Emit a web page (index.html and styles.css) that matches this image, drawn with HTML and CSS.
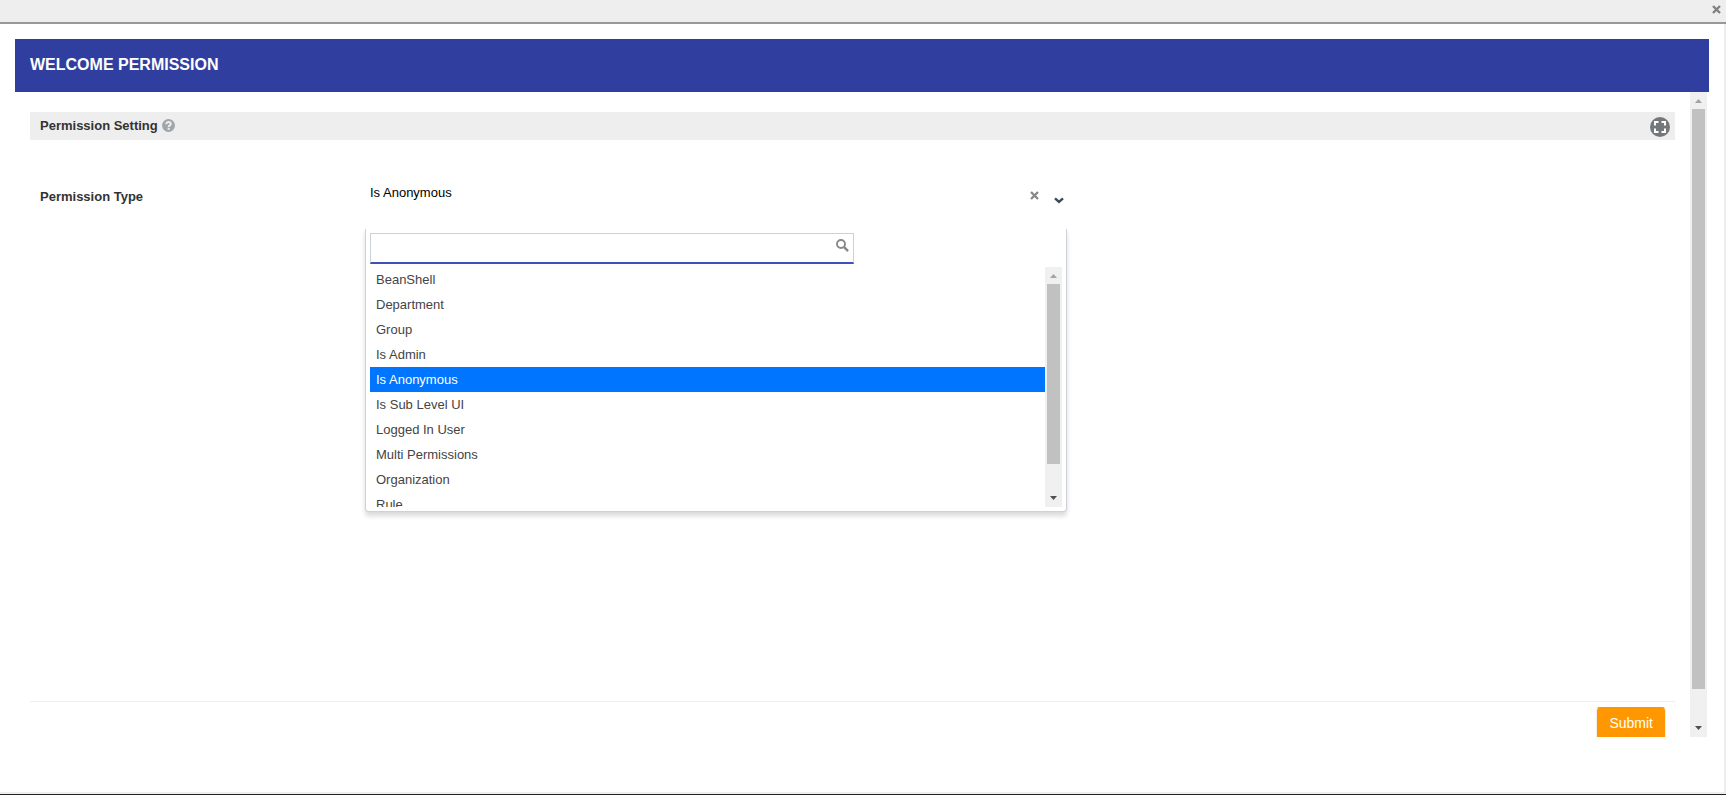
FILE: index.html
```html
<!DOCTYPE html>
<html lang="en">
<head>
<meta charset="utf-8">
<title>Welcome Permission</title>
<link rel="stylesheet" href="styles.css">
</head>
<body>
<div class="dialog">
  <div class="dialog-bar">
    <button class="icon-button" type="button" aria-label="Close">
      <svg width="9" height="9" viewBox="0 0 9 9"><path d="M1 1l7 7M8 1l-7 7" stroke="#808080" stroke-width="2.4"/></svg>
    </button>
  </div>
  <main class="dialog-body">
    <header class="title-bar"><h1 class="title">WELCOME PERMISSION</h1></header>
    <div class="pane">
      <form class="form">
        <div class="section-head">
          <h2 class="section-title">Permission Setting</h2>
          <svg class="help" width="13" height="13" viewBox="0 0 13 13" role="img" aria-label="Help"><circle cx="6.5" cy="6.5" r="6.5" fill="#9fa5ab"/><path d="M4.300 5.200c0-3 4.500-2.700 4.500-.2 0 1.500-2.100 1.400-2.100 2.900" fill="none" stroke="#eee" stroke-width="2"/><path d="M5.600 8.800h2.100v1.900H5.600z" fill="#eee"/></svg>
          <button class="icon-button expand" type="button" aria-label="Full screen">
            <svg width="20" height="20" viewBox="0 0 20 20"><circle cx="10" cy="10" r="10" fill="#75787b"/><path d="M5 8.500V5h3.500M11.500 5H15v3.500M15 11.500V15h-3.500M8.500 15H5v-3.500" fill="none" stroke="#fff" stroke-width="2"/></svg>
          </button>
        </div>
        <div class="field">
          <span class="label" id="type-label">Permission Type</span>
          <div class="select">
            <button class="select-value" type="button" aria-haspopup="listbox" aria-expanded="true" aria-labelledby="type-label type-value">
              <span id="type-value">Is Anonymous</span>
              <svg class="chevron" width="10" height="7" viewBox="0 0 10 7"><path d="M1 1.300l4 3.500 4-3.500" fill="none" stroke="#3b4a5a" stroke-width="2.400"/></svg>
            </button>
            <button class="icon-button clear" type="button" aria-label="Clear">
              <svg width="9" height="9" viewBox="0 0 9 9"><path d="M1 1l7 7M8 1l-7 7" stroke="#888" stroke-width="2.400"/></svg>
            </button>
            <div class="menu">
              <div class="search">
                <input class="search-input" type="text" aria-label="Search permission types">
                <svg class="search-icon" width="13" height="13" viewBox="0 0 13 13"><circle cx="5" cy="5" r="4" fill="none" stroke="#888" stroke-width="1.900"/><path d="M7.800 7.800l4.300 4.300" stroke="#888" stroke-width="2.400"/></svg>
              </div>
              <div class="results">
                <ul class="options" role="listbox" aria-labelledby="type-label">
                  <li class="option" role="option">BeanShell</li>
                  <li class="option" role="option">Department</li>
                  <li class="option" role="option">Group</li>
                  <li class="option" role="option">Is Admin</li>
                  <li class="option selected" role="option" aria-selected="true">Is Anonymous</li>
                  <li class="option" role="option">Is Sub Level UI</li>
                  <li class="option" role="option">Logged In User</li>
                  <li class="option" role="option">Multi Permissions</li>
                  <li class="option" role="option">Organization</li>
                  <li class="option" role="option">Rule</li>
                </ul>
                <div class="scrollbar" aria-hidden="true">
                  <svg class="arrow" width="17" height="17" viewBox="0 0 17 17"><path d="M5 11l3.500-4 3.500 4z" fill="#a3a3a3"/></svg>
                  <div class="track"><div class="thumb menu-thumb"></div></div>
                  <svg class="arrow" width="17" height="17" viewBox="0 0 17 17"><path d="M5 6h7l-3.500 4z" fill="#505050"/></svg>
                </div>
              </div>
            </div>
          </div>
        </div>
        <div class="actions"><button class="submit" type="submit">Submit</button></div>
      </form>
      <div class="scrollbar" aria-hidden="true">
        <svg class="arrow" width="17" height="17" viewBox="0 0 17 17"><path d="M5 11l3.500-4 3.500 4z" fill="#a3a3a3"/></svg>
        <div class="track"><div class="thumb page-thumb"></div></div>
        <svg class="arrow" width="17" height="17" viewBox="0 0 17 17"><path d="M5 6h7l-3.500 4z" fill="#505050"/></svg>
      </div>
    </div>
  </main>
</div>
</body>
</html>
```

FILE: styles.css
```css
* {
  box-sizing: border-box;
}

body {
  margin: 0;
  background: #fff;
  color: #333;
  font-family: "Liberation Sans", Arial, sans-serif;
  font-size: 13px;
}

button,
input {
  font: inherit;
}

svg {
  display: block;
}

.dialog {
  display: flex;
  flex-direction: column;
  min-height: 100vh;
  border-bottom: 1px solid #222;
}

.dialog-bar {
  display: flex;
  justify-content: flex-end;
  align-items: flex-start;
  height: 24px;
  padding: 5px 5px 0 0;
  background: #eee;
  border-bottom: 2px solid #999;
}

.icon-button {
  padding: 0;
  border: 0;
  background: none;
  cursor: pointer;
}

.dialog-body {
  display: flex;
  flex: 1;
  flex-direction: column;
  padding: 15px 15px 55px;
  border-right: 2px solid #eee;
  border-bottom: 2px solid #eee;
}

.title-bar {
  height: 53px;
  padding: 17px 15px 0;
  background: #303f9f;
}

.title {
  margin: 0;
  color: #fff;
  font-size: 16px;
  line-height: 18px;
}

.pane {
  display: flex;
  flex: 1;
  gap: 15px;
  padding: 0 2px 0 15px;
}

.form {
  display: flex;
  flex: 1;
  flex-direction: column;
  padding-top: 20px;
}

.section-head {
  display: flex;
  align-items: center;
  gap: 4px;
  height: 28px;
  padding: 0 5px 0 10px;
  background: #eee;
}

.section-title {
  margin: 0;
  font-size: 13px;
  line-height: 20px;
}

.help {
  margin-bottom: 2px;
}

.expand {
  margin-left: auto;
  padding-top: 2px;
}

.field {
  display: flex;
  padding: 40px 0 0 10px;
}

.label {
  width: 325px;
  padding-top: 9px;
  font-weight: bold;
  line-height: 16px;
}

.select {
  position: relative;
  width: 702px;
}

.select-value {
  display: flex;
  justify-content: space-between;
  width: 100%;
  padding: 5px 3px 20px 5px;
  border: 0;
  background: none;
  color: #000;
  line-height: 16px;
  text-align: left;
}

.chevron {
  margin-top: 12px;
}

.clear {
  position: absolute;
  top: 11px;
  right: 28px;
}

.menu {
  position: absolute;
  top: 49px;
  left: 0;
  width: 100%;
  padding: 4px;
  background: #fff;
  border: 1px solid #cdd1dc;
  border-top: 0;
  border-radius: 0 0 4px 4px;
  box-shadow: 0 4px 5px rgba(0, 0, 0, 0.15);
}

.search {
  position: relative;
  width: 70%;
}

.search-input {
  display: block;
  width: 100%;
  height: 31px;
  padding: 4px 24px 4px 5px;
  border: 1px solid #cdd1d8;
  border-bottom: 2px solid #3f51b5;
  outline: 0;
}

.search-icon {
  position: absolute;
  top: 6px;
  right: 5px;
}

.results {
  display: flex;
  height: 240px;
  margin-top: 3px;
}

.options {
  flex: 1;
  margin: 0;
  padding: 0;
  overflow: hidden;
  list-style: none;
}

.option {
  height: 25px;
  padding: 0 6px;
  color: #444;
  line-height: 25px;
}

.option.selected {
  background: #0075ff;
  color: #fff;
}

.scrollbar {
  display: flex;
  flex-direction: column;
  width: 17px;
  background: #f0f0f0;
}

.track {
  flex: 1;
  padding: 0 2px;
}

.thumb {
  background: #c1c1c1;
}

.menu-thumb {
  height: 180px;
}

.page-thumb {
  height: 580px;
}

.actions {
  display: flex;
  justify-content: flex-end;
  height: 36px;
  margin-top: auto;
  padding: 5px 9px 0 0;
  border-top: 1px solid #eee;
  overflow: hidden;
}

.submit {
  height: 36px;
  padding: 0 12px 4px;
  border: 1px solid #eee;
  border-top-color: #ff9800;
  border-radius: 4px;
  background: #ff9800;
  color: #fff;
  font-size: 14px;
}
```
